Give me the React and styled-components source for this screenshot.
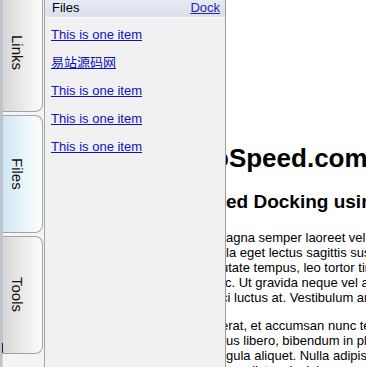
import React from "react";
import styled, { createGlobalStyle } from "styled-components";

const tabs = [
  { label: "Links", active: false },
  { label: "Files", active: true },
  { label: "Tools", active: false },
];

const items = [
  "This is one item",
  "易站源码网",
  "This is one item",
  "This is one item",
  "This is one item",
];

const paragraphs = [
  [
    { text: "agna semper laoreet vel nibh. Donec", shift: 0 },
    { text: "la eget lectus sagittis suscipit. Nam", shift: 0 },
    { text: "utate tempus, leo tortor tincidunt", shift: -5 },
    { text: "c. Ut gravida neque vel arcu", shift: -1 },
    { text: "ci luctus at. Vestibulum ante", shift: -5 },
  ],
  [
    { text: "erat, et accumsan nunc tempor", shift: -5 },
    { text: "us libero, bibendum in placerat", shift: 0 },
    { text: "gula aliquet. Nulla adipiscing", shift: 0 },
    { text: "ras dictum lacinia sem, at", shift: 0 },
  ],
];

function App() {
  return (
    <>
      <GlobalStyle />
      <Page>
        <SideBar>
          <Rail />
          <TabColumn>
            {tabs.map((tab) => (
              <Tab key={tab.label} $active={tab.active}>
                <TabLabel>{tab.label}</TabLabel>
              </Tab>
            ))}
          </TabColumn>
        </SideBar>
        <DockPanel>
          <PanelHeader>
            <HeaderTitle>Files</HeaderTitle>
            <DockLink href="#">Dock</DockLink>
          </PanelHeader>
          <ItemList>
            {items.map((item, i) => (
              <ItemLink key={i} href="#">
                {item}
              </ItemLink>
            ))}
          </ItemList>
        </DockPanel>
        <Content>
          <Title $shift={-13}>oSpeed.com</Title>
          <SubTitle>ed Docking using Javascript</SubTitle>
          {paragraphs.map((lines, i) => (
            <Paragraph key={i}>
              {lines.map((line, j) => (
                <Line key={j} $shift={line.shift}>
                  {line.text}
                </Line>
              ))}
            </Paragraph>
          ))}
        </Content>
      </Page>
    </>
  );
}

export default App;

const GlobalStyle = createGlobalStyle`
  html, body {
    margin: 0;
    padding: 0;
    background: #fff;
    overflow: hidden;
  }
  body {
    font-family: "Liberation Sans", Arial, "Noto Sans CJK SC", sans-serif;
  }
`;

const Page = styled.div`
  display: flex;
  height: 100vh;
  overflow: hidden;
  background: #fff;
`;

const SideBar = styled.div`
  width: 45px;
  flex-shrink: 0;
  box-sizing: border-box;
  display: flex;
  background: #f4f4f4;
  border-right: 1px solid #a6a6a6;
`;

const Rail = styled.div`
  width: 3px;
  flex-shrink: 0;
  background: linear-gradient(
    to bottom,
    #bcc5ce 0,
    #bcc5ce 343px,
    #1e1e1e 343px,
    #1e1e1e 353px,
    #d0d6dc 353px
  );
  background-size: 1px 100%;
  background-repeat: no-repeat;
  background-position: right top;
  background-color: #bcc5ce;
`;

const TabColumn = styled.div`
  display: flex;
  flex-direction: column;
  gap: 3px;
  margin-top: -6px;
`;

const Tab = styled.div`
  width: 40px;
  height: 118px;
  box-sizing: border-box;
  display: flex;
  align-items: center;
  padding-left: 6px;
  border: 1px solid #a3a3a3;
  border-left: none;
  border-radius: 0 8px 8px 0;
  background: ${(p) =>
    p.$active
      ? "linear-gradient(to right, #cfe7f2, #eef7fb 60%, #fbfdfe)"
      : "linear-gradient(to right, #d6d6d6, #eeeeee 60%, #fbfbfb)"};
`;

const TabLabel = styled.span`
  writing-mode: vertical-rl;
  font-size: 15px;
  line-height: 17px;
  color: #111;
`;

const DockPanel = styled.div`
  width: 181px;
  flex-shrink: 0;
  box-sizing: border-box;
  background: #f1f1f1;
  border-right: 1px solid #9c9c9c;
`;

const PanelHeader = styled.div`
  height: 18px;
  box-sizing: border-box;
  display: flex;
  align-items: flex-start;
  justify-content: space-between;
  padding: 0 5px 0 7px;
  background: linear-gradient(to bottom, #e6ebf3, #d9e0ec);
  border-bottom: 1px solid #f7f8fa;
`;

const HeaderTitle = styled.span`
  font-size: 13px;
  line-height: 15px;
  color: #000;
`;

const DockLink = styled.a`
  font-size: 13px;
  line-height: 15px;
  color: #2626b4;
  text-decoration: underline;
`;

const ItemList = styled.div`
  display: flex;
  flex-direction: column;
  align-items: flex-start;
  gap: 13px;
  padding: 9px 0 0 6px;
`;

const ItemLink = styled.a`
  font-size: 13px;
  line-height: 15px;
  color: #1010c8;
  text-decoration: underline;
  font-family: "Liberation Sans", Arial, "Noto Sans CJK SC", sans-serif;
`;

const Content = styled.div`
  flex: 1;
  min-width: 0;
  overflow: hidden;
  padding-top: 143px;
  color: #000;
`;

const Title = styled.h1`
  margin: 0 0 18px ${(p) => p.$shift || 0}px;
  font-size: 26px;
  line-height: 30px;
  font-weight: bold;
  white-space: nowrap;
`;

const SubTitle = styled.h2`
  margin: 0 0 17px;
  font-size: 19px;
  line-height: 22px;
  font-weight: bold;
  white-space: nowrap;
`;

const Paragraph = styled.p`
  margin: 0 0 13px;
  font-size: 13px;
  line-height: 15px;
`;

const Line = styled.span`
  display: block;
  white-space: nowrap;
  margin-left: ${(p) => p.$shift}px;
`;
